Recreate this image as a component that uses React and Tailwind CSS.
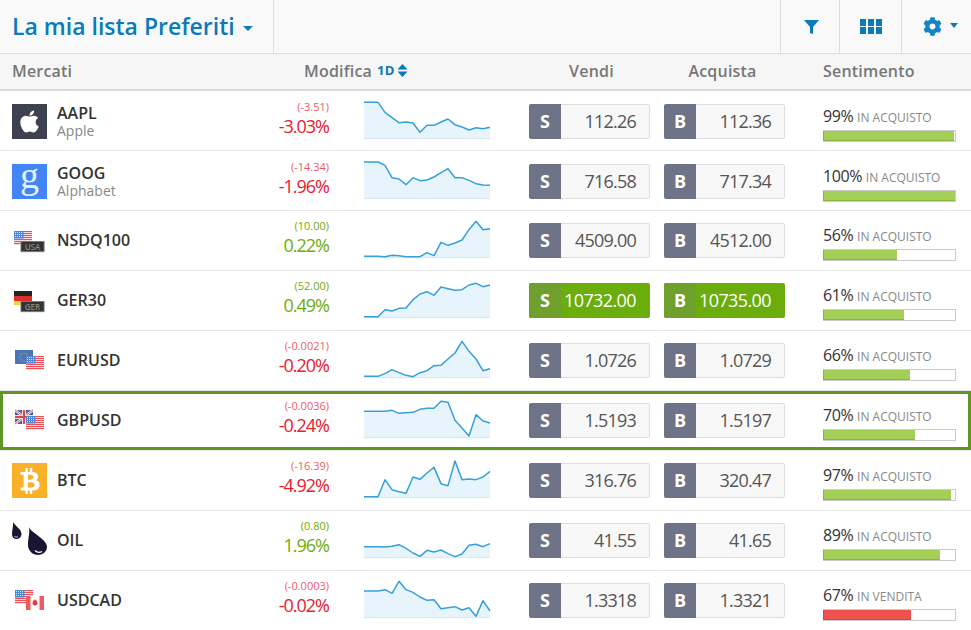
import { FaApple, FaBtc, FaCog } from 'react-icons/fa'

const FONT = "font-['Open_Sans','Liberation_Sans',sans-serif]"

function FlagUS({ x, y }) {
  return (
    <g transform={`translate(${x} ${y})`}>
      <rect width="18" height="14" fill="#fff" />
      {[0, 2, 4, 6, 8, 10, 12].map(s => <rect key={s} y={s} width="18" height="1.2" fill="#e8535a" />)}
      <rect width="9.5" height="7.5" fill="#4f86d6" />
      {[1.5, 3.5, 5.5].map(cy => [1.5, 3.5, 5.5, 7.5].map(cx => <rect key={`${cx}-${cy}`} x={cx - 0.5} y={cy - 0.5} width="1" height="1" fill="#d6e4f7" />))}
    </g>
  )
}

function FlagDE({ x, y }) {
  return (
    <g transform={`translate(${x} ${y})`}>
      <rect width="18" height="5" fill="#222" />
      <rect y="5" width="18" height="5" fill="#d9302c" />
      <rect y="10" width="18" height="4" fill="#f5cf3c" />
    </g>
  )
}

function FlagEU({ x, y }) {
  return (
    <g transform={`translate(${x} ${y})`}>
      <rect width="18" height="14" fill="#4a76b8" />
      {[0, 1, 2, 3, 4, 5, 6, 7].map(i => (
        <circle key={i} cx={9 + 4 * Math.cos(i * 0.785)} cy={7 + 4 * Math.sin(i * 0.785)} r="0.6" fill="#d8c94a" />
      ))}
    </g>
  )
}

function FlagUK({ x, y }) {
  return (
    <g transform={`translate(${x} ${y})`}>
      <rect width="18" height="14" fill="#3f5fa8" />
      <path d="M0 0L18 14M18 0L0 14" stroke="#f3dede" strokeWidth="2.6" />
      <path d="M0 0L18 14M18 0L0 14" stroke="#d9534f" strokeWidth="0.8" />
      <path d="M9 0V14M0 7H18" stroke="#f3dede" strokeWidth="4" />
      <path d="M9 0V14M0 7H18" stroke="#d9484c" strokeWidth="2" />
    </g>
  )
}

function FlagCA({ x, y }) {
  return (
    <g transform={`translate(${x} ${y})`}>
      <rect width="18" height="14" fill="#fff" />
      <rect width="4.5" height="14" fill="#ee5a5f" />
      <rect x="13.5" width="4.5" height="14" fill="#ee5a5f" />
      <path d="M9 3l1 1.8 1.2-.4-.4 2.2 1.2.2-1 1.4.3.8H9.4V10h-.8V8.9H6.7l.3-.8-1-1.4 1.2-.2-.4-2.2 1.2.4z" fill="#e8353b" />
    </g>
  )
}

function Chip({ label }) {
  return (
    <g>
      <rect x="8.500" y="18.500" width="24.500" height="11" fill="#dcdcdc" />
      <rect x="9" y="18.500" width="23" height="10" fill="#333" stroke="#777" strokeWidth="0.8" />
      <text x="20.500" y="26.500" textAnchor="middle" fontSize="8" fontFamily="Open Sans, sans-serif" fill="#888" fontWeight="600">{label}</text>
    </g>
  )
}

function Pair({ children }) {
  return <svg className="w-[35px] h-[35px] overflow-visible" viewBox="0 0 35 35">{children}</svg>
}

function Oil() {
  return (
    <svg className="w-[35px] h-[35px] overflow-visible" viewBox="0 0 35 35">
      <path d="M1 -1C3 3 9.500 6 9.500 11C9.500 14 7 16 4.500 16C2 16 0 14 0 11C0 7 1.500 3 1 -1Z" fill="#1a1533" />
      <path d="M17 4C19 10 35 16 35 24C35 29 30 32 26 32C21 32 16 28 16 22C16 15 18 10 17 4Z" fill="#1a1533" />
      <path d="M23 27.500C25 29.500 28 29.500 30 28.500" stroke="#fff" strokeWidth="1.2" fill="none" />
      <path d="M2.500 13.500C3.500 14.300 5 14.300 6 13.800" stroke="#fff" strokeWidth="0.9" fill="none" />
    </svg>
  )
}

const ICONS = {
  AAPL: (
    <div className="w-[35px] h-[35px] bg-[#3e4250] flex items-center justify-center">
      <FaApple className="w-[25px] h-[25px] text-white" />
    </div>
  ),
  GOOG: (
    <div className="w-[35px] h-[35px] bg-[#4285f4] flex items-center justify-center">
      <span className="text-[#e8f0fe] text-[38px] leading-none font-['Liberation_Serif',serif] -mt-[14px]">g</span>
    </div>
  ),
  NSDQ100: <Pair><FlagUS x={2} y={8} /><Chip label="USA" /></Pair>,
  GER30: <Pair><FlagDE x={2} y={8} /><Chip label="GER" /></Pair>,
  EURUSD: <Pair><FlagEU x={3} y={7} /><FlagUS x={14} y={13} /></Pair>,
  GBPUSD: <Pair><FlagUK x={3} y={7} /><FlagUS x={14} y={13} /></Pair>,
  BTC: (
    <div className="w-[35px] h-[35px] bg-[#fbb02a] flex items-center justify-center">
      <FaBtc className="w-[26px] h-[26px] text-white" />
    </div>
  ),
  OIL: <Oil />,
  USDCAD: <Pair><FlagUS x={3} y={7} /><FlagCA x={14} y={13} /></Pair>,
}

const ROWS = [
  { sym: 'AAPL', sub: 'Apple', delta: '(-3.51)', pct: '-3.03%', up: false, sell: '112.26', buy: '112.36', val: 99, tag: 'IN ACQUISTO',
    spark: [110,110,110,80,64,49,51,48,20,41,41,51,60,43,36,27,34,31,35] },
  { sym: 'GOOG', sub: 'Alphabet', delta: '(-14.34)', pct: '-1.96%', up: false, sell: '716.58', buy: '717.34', val: 100, tag: 'IN ACQUISTO',
    spark: [111,111,111,101,64,60,43,64,55,57,66,79,91,64,64,56,46,42,41] },
  { sym: 'NSDQ100', delta: '(10.00)', pct: '0.22%', up: true, sell: '4509.00', buy: '4512.00', val: 56, tag: 'IN ACQUISTO',
    spark: [5,5,5,4,8,7,4,4,4,16,7,47,38,45,54,85,110,85,88] },
  { sym: 'GER30', delta: '(52.00)', pct: '0.49%', up: true, sell: '10732.00', buy: '10735.00', val: 61, tag: 'IN ACQUISTO', active: true,
    spark: [4,4,4,25,21,29,30,55,72,79,68,93,88,83,85,99,104,94,99] },
  { sym: 'EURUSD', delta: '(-0.0021)', pct: '-0.20%', up: false, sell: '1.0726', buy: '1.0729', val: 66, tag: 'IN ACQUISTO',
    spark: [5,5,5,13,25,16,8,4,16,22,37,38,57,75,110,80,57,22,28] },
  { sym: 'GBPUSD', delta: '(-0.0036)', pct: '-0.24%', up: false, sell: '1.5193', buy: '1.5197', val: 70, tag: 'IN ACQUISTO', selected: true,
    spark: [80,80,80,80,83,74,76,77,86,89,89,110,107,53,30,6,70,51,45] },
  { sym: 'BTC', delta: '(-16.39)', pct: '-4.92%', up: false, sell: '316.76', buy: '320.47', val: 97, tag: 'IN ACQUISTO',
    spark: [4,4,4,55,25,19,14,63,56,75,92,43,37,111,55,57,55,63,80] },
  { sym: 'OIL', delta: '(0.80)', pct: '1.96%', up: true, sell: '41.55', buy: '41.65', val: 89, tag: 'IN ACQUISTO',
    spark: [34,34,34,33,35,40,29,15,5,23,18,24,13,4,12,38,41,34,43] },
  { sym: 'USDCAD', delta: '(-0.0003)', pct: '-0.02%', up: false, sell: '1.3318', buy: '1.3321', val: 67, tag: 'IN VENDITA', sellSide: true,
    spark: [81,81,81,85,74,110,85,77,63,53,55,28,31,34,24,31,5,52,21] },
]

function Spark({ data }) {
  // heights were read off at 3x, so the viewBox is 3x too
  const pts = data.map((h, i) => `${i * 21},${120 - h}`).join(' ')
  return (
    <svg className="w-[126px] h-[40px] block overflow-visible" viewBox="0 0 378 120">
      <polygon points={`0,120 ${pts} 378,120`} fill="#e8f4fb" />
      <line x1="0" y1="119" x2="378" y2="119" stroke="#dfe3e6" strokeWidth="3" />
      <polyline points={pts} fill="none" stroke="#36a0d8" strokeWidth="4.5" strokeLinejoin="round" />
    </svg>
  )
}

function Price({ side, value, active }) {
  if (active) return (
    <div className="w-[121px] h-[35px] flex rounded-[2px] bg-[#6aad0c]">
      <div className="w-[32px] rounded-l-[2px] bg-[#6fa02e] text-white font-bold text-[18px] flex items-center justify-center">{side}</div>
      <div className="flex-1 text-white text-[18px] tracking-[-0.6px] flex items-center justify-end pr-[14px]">{value}</div>
    </div>
  )
  return (
    <div className="w-[121px] h-[35px] flex rounded-[2px] bg-[#f8f8f8] border border-[#dedede]">
      <div className="w-[32px] -m-px rounded-l-[2px] bg-[#6f7387] text-white font-bold text-[18px] flex items-center justify-center">{side}</div>
      <div className="flex-1 text-[#555] text-[18px] tracking-[-0.8px] flex items-center justify-end pr-[13px]">{value}</div>
    </div>
  )
}

function Row({ r }) {
  // rows with a second name line sit 1px lower in the reference
  return (
    <div className={`h-[60px] flex items-center border-b border-[#e8e8e8] ${r.sub ? 'pt-[2px]' : ''} ${r.selected ? 'ring-3 ring-inset ring-[#5f9623]' : ''}`}>
      <div className="w-[230px] pl-3 flex items-center gap-[10px] shrink-0">
        {ICONS[r.sym]}
        <div className={r.sub ? 'mb-[2px]' : 'mb-[2px]'}>
          <div className="text-[16px] leading-[20px] font-semibold text-[#333]">{r.sym}</div>
          {r.sub && <div className="text-[14px] leading-[16px] text-[#888]">{r.sub}</div>}
        </div>
      </div>
      <div className="w-[99px] shrink-0 text-right mb-[6px]">
        <div className={`text-[11px] leading-[14px] ${r.up ? 'text-[#6fac0b]' : 'text-[#ee5a66]'}`}>{r.delta}</div>
        <div className={`text-[18px] leading-[24px] font-medium tracking-[-1px] ${r.up ? 'text-[#6fac0b]' : 'text-[#e8202d]'}`}>{r.pct}</div>
      </div>
      <div className={`ml-[35px] self-end shrink-0 ${r.sub ? 'mb-[11px]' : 'mb-[12px]'}`}><Spark data={r.spark} /></div>
      <div className="ml-[39px] shrink-0"><Price side="S" value={r.sell} active={r.active} /></div>
      <div className="ml-[14px] shrink-0"><Price side="B" value={r.buy} active={r.active} /></div>
      <div className={`ml-[38px] w-[133px] shrink-0 self-start ${r.sub ? 'mt-[13px]' : 'mt-[14px]'}`}>
        <div className="text-[16px] leading-[20px] tracking-[-0.4px] text-[#333] whitespace-nowrap">
          {r.val}% <span className="text-[12px] tracking-normal text-[#888]">{r.tag}</span>
        </div>
        <div className="h-[12px] border border-[#ccc] border-l-0 mt-[2px] bg-white">
          <div
            className={`h-full border-l border-b ${r.sellSide ? 'bg-[#ef5350] border-[#d9423f]' : 'bg-[#a4cf56] border-[#8ab53e]'}`}
            style={{ width: `${r.val}%` }}
          />
        </div>
      </div>
    </div>
  )
}

export default function App() {
  return (
    <div className={`w-[971px] h-[630px] overflow-hidden bg-white ${FONT}`}>
      <div className="h-[54px] flex bg-[#f9f9f9] border-b border-[#dedede]">
        <div className="w-[274px] pl-3 flex items-center border-r border-[#dedede]">
          <span className="text-[23px] font-semibold text-[#0a7ab8]">La mia lista Preferiti</span>
          <span className="ml-[8px] mt-[4px] w-0 h-0 border-x-[5px] border-x-transparent border-t-[5px] border-t-[#0a7ab8]" />
        </div>
        <div className="flex-1" />
        <div className="w-[59px] pl-[23px] flex items-center border-l border-[#dedede]">
          <svg className="w-[15px] h-[14px]" viewBox="0 0 15 14"><path d="M0 0H15L9 7V14L6 13V7Z" fill="#0a7ab8" /></svg>
        </div>
        <div className="w-[62px] flex items-center justify-center border-l border-[#dedede]">
          <div className="grid grid-cols-3 gap-x-[2px] gap-y-[1px]">
            {[0, 1, 2, 3, 4, 5].map(i => <span key={i} className="w-[6px] h-[7px] bg-[#0a7ab8]" />)}
          </div>
        </div>
        <div className="w-[70px] pl-[21px] flex items-center border-l border-[#dedede]">
          <FaCog className="w-[19px] h-[19px] text-[#1583c4]" />
          <span className="ml-[8px] -mt-[2px] w-0 h-0 border-x-[4.5px] border-x-transparent border-t-[5px] border-t-[#0a7ab8]" />
        </div>
      </div>

      <div className="h-[37px] pb-[2px] flex items-center bg-[#f6f6f6] border-b-2 border-[#d9d9d9] text-[16px] tracking-[0.2px] font-semibold text-[#777]">
        <div className="w-[230px] pl-3 shrink-0">Mercati</div>
        <div className="w-[179px] shrink-0 pl-[74px] flex items-center whitespace-nowrap">
          Modifica
          <span className="ml-[5px] text-[13px] font-bold text-[#0a7ab8]">1D</span>
          <svg className="ml-[3px] w-[11px] h-[13px]" viewBox="0 0 11 13"><path d="M5.500 0L10.500 5.500H0.500ZM5.500 13L0.500 7.500H10.500Z" fill="#0a7ab8" /></svg>
        </div>
        <div className="w-[121px] ml-[122px] shrink-0 text-center">Vendi</div>
        <div className="w-[121px] ml-[10px] shrink-0 text-center">Acquista</div>
        <div className="ml-[40px]">Sentimento</div>
      </div>

      {ROWS.map(r => <Row key={r.sym} r={r} />)}
    </div>
  )
}
